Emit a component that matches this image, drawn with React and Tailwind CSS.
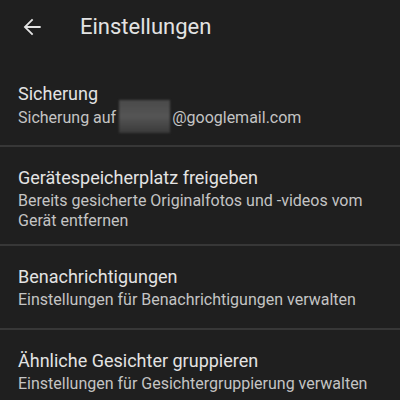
const rows = [
  { title: 'Sicherung', sub: 'backup', pad: 'pt-[19px] pb-[17px]' },
  { title: 'Gerätespeicherplatz freigeben', sub: 'Bereits gesicherte Originalfotos und -videos vom Gerät entfernen', pad: 'pt-[19px] pb-[13px]' },
  { title: 'Benachrichtigungen', sub: 'Einstellungen für Benachrichtigungen verwalten', pad: 'pt-[19px] pb-[18px]' },
  { title: 'Ähnliche Gesichter gruppieren', sub: 'Einstellungen für Gesichtergruppierung verwalten', pad: 'pt-[19px] pb-[16px]' },
];

function BackArrow() {
  return (
    <svg width="26" height="26" viewBox="0 0 24 24" fill="#e3e3e3">
      <path d="M20 11.1H7.6l5.6-5.6L12 4.3 4.3 12l7.7 7.7 1.2-1.2-5.6-5.6H20v-1.8z" />
    </svg>
  );
}

export default function App() {
  return (
    <div className="w-[400px] h-[400px] overflow-hidden bg-[#1f1f1f]" style={{ fontFamily: 'Roboto, "Noto Sans", sans-serif' }}>
      <header className="h-[63px] flex items-start pt-[13px]">
        <div className="w-[80px] pl-[19px] flex items-center h-[28px]">
          <BackArrow />
        </div>
        <h1 className="text-[22px] leading-[28px] text-[#e3e3e3]">Einstellungen</h1>
      </header>

      {rows.map((r, i) => (
        <div key={r.title}>
          {i > 0 && <div className="h-[2px] bg-[#373737]" />}
          <div className={`px-[18px] ${r.pad}`}>
            <p className="text-[18px] leading-[24px] text-[#e3e3e3]">{r.title}</p>
            {r.sub === 'backup' ? (
              <div className="relative mt-[1px] text-[16px] leading-[20px] text-[#c4c4c4]">
                <span>Sicherung auf </span>
                <span className="inline-block w-[52px] h-[16px]" />
                <span>@googlemail.com</span>
                <span className="absolute left-[101px] top-[-7px] w-[51px] h-[33px] bg-gradient-to-b from-[#4a4a4a] via-[#555555] to-[#3a3a3a] blur-[1px]" />
              </div>
            ) : (
              <p className="mt-[1px] text-[16px] leading-[20px] text-[#c4c4c4]">{r.sub}</p>
            )}
          </div>
        </div>
      ))}
    </div>
  );
}
